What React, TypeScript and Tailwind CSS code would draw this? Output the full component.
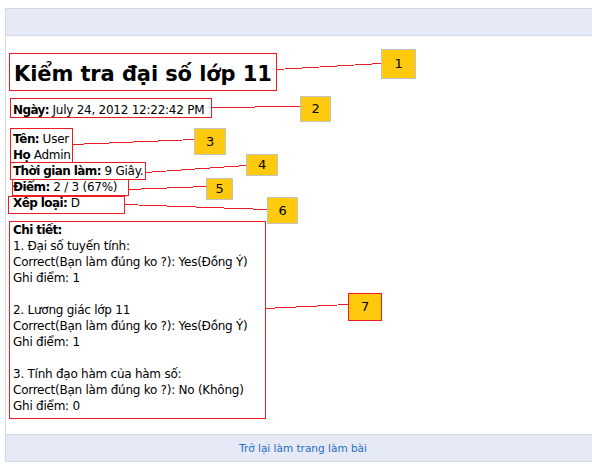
const font = { fontFamily: '"DejaVu Sans", Verdana, sans-serif' };

// annotation layer: red frames + leader lines (coordinates taken from the marked-up screenshot)
const frames = [
  { x: 9, y: 53, w: 267, h: 37 },
  { x: 10, y: 98, w: 201, h: 19 },
  { x: 10, y: 128, w: 62, h: 34 },
  { x: 10, y: 162, w: 135, h: 17 },
  { x: 12, y: 179, w: 116, h: 16 },
  { x: 8, y: 196, w: 116, h: 17 },
  { x: 9, y: 221, w: 256, h: 197 },
];

const leaders = [
  [276, 69, 381, 63],
  [211, 107, 300, 106],
  [72, 144, 195, 139],
  [145, 172, 246, 165],
  [128, 189, 206, 186],
  [124, 204, 267, 209],
  [265, 308, 348, 304],
];

const tags = [
  { n: "1", x: 381, y: 49, w: 35, h: 30 },
  { n: "2", x: 300, y: 96, w: 31, h: 26 },
  { n: "3", x: 194, y: 128, w: 32, h: 27 },
  { n: "4", x: 246, y: 154, w: 32, h: 22 },
  { n: "5", x: 206, y: 178, w: 27, h: 22 },
  { n: "6", x: 267, y: 197, w: 31, h: 27 },
  { n: "7", x: 348, y: 293, w: 34, h: 28, red: true },
];

const details = [
  { title: "1. Đại số tuyến tính:", answer: "Yes(Đồng Ý)", score: 1 },
  { title: "2. Lương giác lớp 11", answer: "Yes(Đồng Ý)", score: 1 },
  { title: "3. Tính đạo hàm của hàm số:", answer: "No (Không)", score: 0 },
];

function Label({ children }: { children: React.ReactNode }) {
  return <b className="tracking-[-0.6px]">{children}</b>;
}

export default function App() {
  return (
    <div className="relative h-[468px] w-[592px] overflow-hidden bg-white text-[12px] leading-4 tracking-[-0.25px] text-black" style={font}>
      <div className="ml-[5px] mt-2 border-l border-[#d5d8e4]">
        {/* top bar */}
        <div className="h-[28px] border-y border-[#d5d8e4] bg-[#e6e9f6]" />

        {/* result */}
        <div className="h-[398px] pl-[7px] pt-[20px]">
          <h1 className="h-[37px] pl-[1px] text-[21px] font-bold leading-[37px] tracking-[-0.1px]">Kiểm tra đại số lớp 11</h1>
          <div className="mt-[9px]">
            <Label>Ngày:</Label> July 24, 2012 12:22:42 PM
          </div>
          <div className="mt-[13px]">
            <Label>Tên:</Label> User
          </div>
          <div>
            <Label>Họ</Label> Admin
          </div>
          <div>
            <Label>Thời gian làm:</Label> 9 Giây.
          </div>
          <div>
            <Label>Điểm:</Label> 2 / 3 (67%)
          </div>
          <div>
            <Label>Xếp loại:</Label> D
          </div>
          <div className="mt-[11px]">
            <Label>Chi tiết:</Label>
            {details.map((d, i) => (
              <div key={i} className={i > 0 ? "mt-4" : ""}>
                <div>{d.title}</div>
                <div>Correct(Bạn làm đúng ko ?): {d.answer}</div>
                <div>Ghi điểm: {d.score}</div>
              </div>
            ))}
          </div>
        </div>

        {/* bottom bar */}
        <div className="flex h-[28px] items-center justify-center border-y border-[#d5d8e4] bg-[#e6e9f6] pl-2">
          <a className="text-[10.5px] tracking-normal text-[#1f6fc6]">Trở lại làm trang làm bài</a>
        </div>
      </div>

      <svg className="pointer-events-none absolute left-0 top-0" width={592} height={468} shapeRendering="crispEdges">
        {frames.map((f, i) => (
          <rect key={i} x={f.x + 0.5} y={f.y + 0.5} width={f.w} height={f.h} fill="none" stroke="#ed1c24" />
        ))}
        {leaders.map(([x1, y1, x2, y2], i) => (
          <line key={i} x1={x1} y1={y1 + 0.5} x2={x2} y2={y2 + 0.5} stroke="#ed1c24" />
        ))}
      </svg>

      {tags.map((t) => (
        <div
          key={t.n}
          className={`absolute flex items-center justify-center bg-[#ffc90e] text-[13px] ${t.red ? "border border-[#ed1c24]" : "border border-[#c3c3c3]"}`}
          style={{ left: t.x, top: t.y, width: t.w, height: t.h }}
        >
          {t.n}
        </div>
      ))}
    </div>
  );
}
